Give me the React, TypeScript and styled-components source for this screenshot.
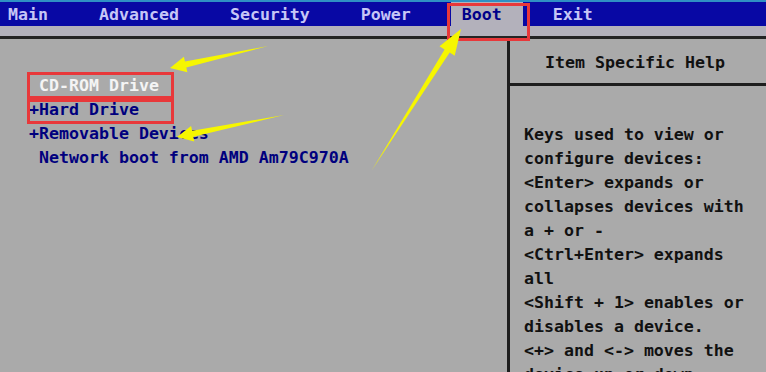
import React from 'react';
import styled, { createGlobalStyle } from 'styled-components';

const Global = createGlobalStyle`
  html, body { margin: 0; padding: 0; background: #aaaaaa; }
  body { width: 766px; height: 372px; overflow: hidden; }
`;

const Screen = styled.div`
  position: relative;
  width: 766px;
  height: 372px;
  overflow: hidden;
  background: #aaaaaa;
  display: flex;
  flex-direction: column;
  font-family: "DejaVu Sans Mono", "Liberation Mono", monospace;
  font-weight: bold;
  font-size: 16.6px;
`;

const MenuBar = styled.div`
  box-sizing: border-box;
  height: 26px;
  flex: none;
  background: #0808a4;
  border-top: 2px solid #2f8fc4;
  display: flex;
  align-items: stretch;
  gap: 19px;
`;

const Tab = styled.div<{ $active?: boolean }>`
  display: flex;
  align-items: center;
  padding: 0 21px 0 11px;
  color: ${(p) => (p.$active ? '#00008a' : '#c6c6f6')};
  background: ${(p) => (p.$active ? '#b3b1bb' : 'transparent')};
  &:first-child { padding-left: 8px; }
`;

const Strip = styled.div`
  flex: none;
  height: 10px;
  background: #b3b1bb;
  border-bottom: 3px solid #242424;
`;

const Body = styled.div`
  flex: 1;
  display: grid;
  grid-template-columns: 510px 1fr;
  min-height: 0;
`;

const LeftPanel = styled.div`
  box-sizing: border-box;
  border-right: 3px solid #1e1e1e;
  padding: 35px 0 0 29px;
  line-height: 24px;
`;

const Entry = styled.div<{ $selected?: boolean }>`
  white-space: pre;
  color: ${(p) => (p.$selected ? '#f4f4f4' : '#00007e')};
`;

const RightPanel = styled.div`
  display: flex;
  flex-direction: column;
  color: #111111;
`;

const HelpHeader = styled.div`
  box-sizing: border-box;
  flex: none;
  height: 44px;
  border-bottom: 3px solid #1e1e1e;
  display: flex;
  align-items: center;
  justify-content: center;
  padding: 3px 6px 0 0;
  height: 47px;
`;

const HelpBody = styled.div`
  padding: 37px 0 0 14px;
  line-height: 24px;
`;

const HelpLine = styled.div`
  white-space: pre;
`;

const Overlay = styled.svg`
  position: absolute;
  left: 0;
  top: 0;
  width: 766px;
  height: 372px;
  pointer-events: none;
`;

type Pt = [number, number];

function arrowPoints(tail: Pt, tip: Pt, headLen: number, headHalf: number, shaftHalf: number): string {
  const dx = tip[0] - tail[0];
  const dy = tip[1] - tail[1];
  const len = Math.hypot(dx, dy);
  const ux = dx / len;
  const uy = dy / len;
  const nx = -uy;
  const ny = ux;
  const bx = tip[0] - headLen * ux;
  const by = tip[1] - headLen * uy;
  const pts: Pt[] = [
    tail,
    [bx + shaftHalf * nx, by + shaftHalf * ny],
    [bx + headHalf * nx, by + headHalf * ny],
    tip,
    [bx - headHalf * nx, by - headHalf * ny],
    [bx - shaftHalf * nx, by - shaftHalf * ny],
  ];
  return pts.map((p) => `${p[0].toFixed(1)},${p[1].toFixed(1)}`).join(' ');
}

const tabs = ['Main', 'Advanced', 'Security', 'Power', 'Boot', 'Exit'];

const entries = [
  { text: ' CD-ROM Drive', selected: true },
  { text: '+Hard Drive' },
  { text: '+Removable Devices' },
  { text: ' Network boot from AMD Am79C970A' },
];

const help = [
  'Keys used to view or',
  'configure devices:',
  '<Enter> expands or',
  'collapses devices with',
  'a + or -',
  '<Ctrl+Enter> expands',
  'all',
  '<Shift + 1> enables or',
  'disables a device.',
  '<+> and <-> moves the',
  'device up or down.',
];

export default function App() {
  return (
    <>
      <Global />
      <Screen>
        <MenuBar>
          {tabs.map((t) => (
            <Tab key={t} $active={t === 'Boot'}>
              {t}
            </Tab>
          ))}
        </MenuBar>
        <Strip />
        <Body>
          <LeftPanel>
            {entries.map((e) => (
              <Entry key={e.text} $selected={e.selected}>
                {e.text}
              </Entry>
            ))}
          </LeftPanel>
          <RightPanel>
            <HelpHeader>Item Specific Help</HelpHeader>
            <HelpBody>
              {help.map((l) => (
                <HelpLine key={l}>{l}</HelpLine>
              ))}
            </HelpBody>
          </RightPanel>
        </Body>
        <Overlay viewBox="0 0 766 372">
          <g fill="none" stroke="#e8383a" strokeWidth="3">
            <rect x="448.5" y="4.5" width="80" height="35" />
            <rect x="28.5" y="73.5" width="144" height="24" />
            <rect x="28.5" y="100.5" width="144" height="22" />
          </g>
          <g fill="#f6f600">
            <polygon points={arrowPoints([268, 46], [170, 68], 16, 8, 3)} />
            <polygon points={arrowPoints([284, 115], [177, 137], 16, 8, 3)} />
            <polygon points={arrowPoints([372, 170], [461, 29], 26, 9, 3)} />
          </g>
        </Overlay>
      </Screen>
    </>
  );
}
